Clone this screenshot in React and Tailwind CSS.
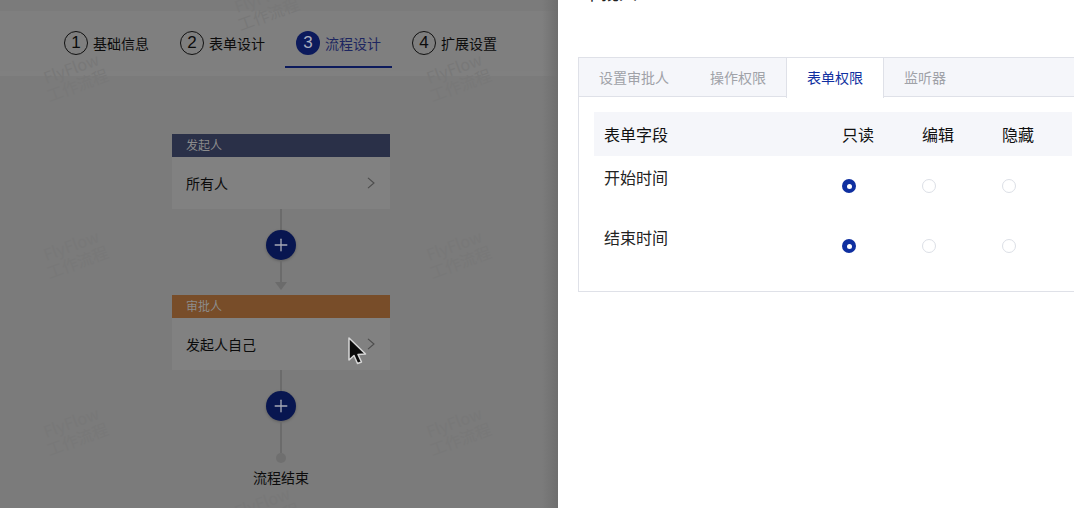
import { Plus } from 'lucide-react'

const STEPS = [
  { n: 1, label: '基础信息' },
  { n: 2, label: '表单设计' },
  { n: 3, label: '流程设计', active: true },
  { n: 4, label: '扩展设置' },
]

const TABS = ['设置审批人', '操作权限', '表单权限', '监听器']

const FIELDS = ['开始时间', '结束时间']

const MARKS = [
  { x: 42, y: 58 }, { x: 425, y: 58 }, { x: 42, y: 235 }, { x: 425, y: 235 },
  { x: 42, y: 412 }, { x: 425, y: 412 }, { x: 233, y: 492 }, { x: 233, y: -13 },
]

function Step({ step }) {
  return (
    <div className={`flex items-center gap-[5px] h-[48px] mt-[9px] px-[11px] border-b-2 ${step.active ? 'border-[#0c1a5c] text-[#1d2660]' : 'border-transparent text-[#0c0c0c]'}`}>
      <span className={`w-[24px] h-[24px] rounded-full flex items-center justify-center text-[17px] font-['Liberation_Sans',sans-serif] ${step.active ? 'bg-[#0c1a5c] text-[#a9adbd]' : 'border border-[#111]'}`}>
        {step.n}
      </span>
      <span className="text-[14px] leading-none">{step.label}</span>
    </div>
  )
}

function AddButton() {
  return (
    <div className="w-[30px] h-[30px] rounded-full bg-[#081650] flex items-center justify-center shadow-[0_1px_3px_rgba(0,0,0,0.25)]">
      <Plus size={20} strokeWidth={1.6} color="#a6a9b5" />
    </div>
  )
}

function FlowNode({ title, name, headClass }) {
  return (
    <div className="w-[218px] bg-[#818181]">
      <div className={`h-[23px] pl-[14px] pb-[2px] flex items-center text-[12px] text-[#8c8c8c] ${headClass}`}>{title}</div>
      <div className="h-[52px] pl-[14px] pr-[15px] flex items-center justify-between text-[14px] text-[#0c0c0c]">
        <span>{name}</span>
        <svg width="8" height="12" viewBox="0 0 8 12" fill="none" stroke="#4c4c4c" strokeWidth="1.1">
          <path d="M1 0.8 L7 6 L1 11.2" />
        </svg>
      </div>
    </div>
  )
}

function Radio({ checked }) {
  if (checked) {
    return (
      <span className="w-[14px] h-[14px] rounded-full bg-[#0f2fa0] flex items-center justify-center">
        <span className="w-[5px] h-[5px] rounded-full bg-white" />
      </span>
    )
  }
  return <span className="block w-[14px] h-[14px] rounded-full border border-[#dcdfe6] bg-white" />
}

export default function App() {
  return (
    <div className="relative w-[1074px] h-[508px] flex overflow-hidden bg-[#7b7b7b] font-['Noto_Sans_CJK_SC','Liberation_Sans',sans-serif]">
      {/* Left: dimmed flow editor */}
      <div className="relative w-[558px] h-full shrink-0 bg-[#7b7b7b]">
        <div className="pt-[11px]">
          <div className="h-[60px] bg-[#7f7f7f] flex gap-[9px] pl-[53px]">
            {STEPS.map(s => <Step key={s.n} step={s} />)}
          </div>
          <div className="h-[5px] bg-[#808080]" />
        </div>

        <div className="ml-[172px] mt-[58px] w-[218px] flex flex-col items-center">
          <FlowNode title="发起人" name="所有人" headClass="bg-[#2a3048]" />
          <div className="w-[2px] h-[21px] bg-[#6b6b6b]" />
          <AddButton />
          <div className="w-[2px] h-[22px] bg-[#6b6b6b]" />
          <div className="w-0 h-0 border-x-[6px] border-x-transparent border-t-[8px] border-t-[#6b6b6b]" />
          <div className="h-[5px]" />
          <FlowNode title="审批人" name="发起人自己" headClass="bg-[#784d29]" />
          <div className="w-[2px] h-[21px] bg-[#6b6b6b]" />
          <AddButton />
          <div className="w-[2px] h-[32px] bg-[#6b6b6b]" />
          <div className="w-[10px] h-[10px] rounded-full bg-[#6f6f6f]" />
          <div className="mt-[2px] text-[14px] leading-[24px] text-[#0c0c0c]">流程结束</div>
        </div>

        {/* watermark */}
        {MARKS.map((m, i) => (
          <div
            key={i}
            className="absolute -rotate-[20deg] text-[16px] leading-[18px] text-[#787878] text-center pointer-events-none"
            style={{ left: m.x, top: m.y }}
          >
            <div>FlyFlow</div>
            <div>工作流程</div>
          </div>
        ))}

        {/* drawer shadow */}
        <div className="absolute top-0 right-0 w-[16px] h-full bg-gradient-to-r from-transparent to-[#6e6e6e]" />

        {/* mouse cursor */}
        <svg className="absolute left-[347px] top-[336px]" width="21" height="30" viewBox="0 0 21 30">
          <path d="M2 2 L2 24 L7 19.5 L10.5 27.5 L14.5 26 L11 18.5 L18.5 18 Z" fill="#0a0a0a" stroke="#d8d8d8" strokeWidth="1.5" strokeLinejoin="round" />
        </svg>
      </div>

      {/* Right: drawer */}
      <div className="relative flex-1 bg-white overflow-hidden pl-[20px] pt-[57px]">
        <div className="absolute left-[25px] -top-[17px] text-[18px] leading-[18px] text-[#222]">审批人</div>

        <div className="w-[520px] h-[235px] border border-[#dfe1e8]">
          <div className="h-[39px] bg-[#f5f6fa] border-b border-[#dfe1e8] flex text-[14px] text-[#a0a2a8]">
            {TABS.map((t, i) => (
              <div
                key={t}
                className={`h-[40px] pb-[2px] flex items-center ${i === 2 ? 'bg-white border-x border-[#dfe1e8] text-[#0f2fa0] px-[20px]' : i === 0 ? 'pl-[20px] pr-[21px]' : 'px-[20px]'}`}
              >
                {t}
              </div>
            ))}
          </div>

          <div className="pl-[15px] pt-[15px]">
            <div className="w-[478px] h-[44px] bg-[#f5f6fa] flex items-center text-[16px] text-[#111]">
              <span className="w-[248px] shrink-0 pl-[10px]">表单字段</span>
              <span className="w-[80px] shrink-0">只读</span>
              <span className="w-[80px] shrink-0">编辑</span>
              <span className="w-[70px] shrink-0">隐藏</span>
            </div>
            {FIELDS.map(f => (
              <div key={f} className="h-[60px] flex text-[16px] text-[#222]">
                <span className="w-[248px] pl-[10px] pt-[9px] leading-[24px]">{f}</span>
                <div className="w-[80px] pt-[23px]"><Radio checked /></div>
                <div className="w-[80px] pt-[23px]"><Radio /></div>
                <div className="w-[80px] pt-[23px]"><Radio /></div>
              </div>
            ))}
          </div>
        </div>
      </div>
    </div>
  )
}
